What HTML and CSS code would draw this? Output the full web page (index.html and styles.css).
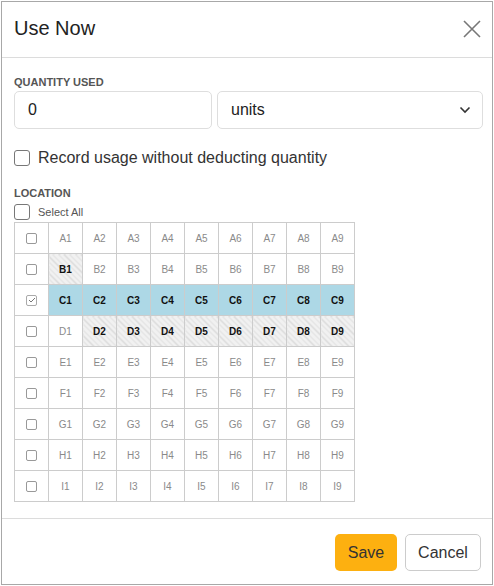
FILE: index.html
```html
<!DOCTYPE html>
<html>
<head>
<meta charset="utf-8">
<link rel="stylesheet" href="styles.css">
</head>
<body>
<div class="dialog">
  <div class="header">
    <h1 class="title">Use Now</h1>
    <svg class="close" width="18" height="18" viewBox="0 0 18 18"><path d="M1 1 L17 17 M17 1 L1 17" stroke="#777" stroke-width="1.6" fill="none"/></svg>
  </div>
  <div class="body">
    <div class="label">QUANTITY USED</div>
    <div class="qty-row">
      <div class="field qty">0</div>
      <div class="field unit">units
        <svg class="chev" width="12" height="8" viewBox="0 0 12 8"><path d="M1.5 1.5 L6 6 L10.5 1.5" stroke="#333" stroke-width="1.6" fill="none"/></svg>
      </div>
    </div>
    <div class="record">
      <span class="box"></span>
      <span class="record-text">Record usage without deducting quantity</span>
    </div>
    <div class="label loc">LOCATION</div>
    <div class="select-all">
      <span class="box"></span>
      <span class="sa-text">Select All</span>
    </div>
    <table class="grid" id="grid"></table>
  </div>
  <div class="footer">
    <button class="btn save">Save</button>
    <button class="btn cancel">Cancel</button>
  </div>
</div>
<script src="script.js"></script>
</body>
</html>
```

FILE: script.js
```js
const rows = "ABCDEFGHI".split("");
const grid = document.getElementById("grid");
const hatched = new Set(["B1","D2","D3","D4","D5","D6","D7","D8","D9"]);
rows.forEach(r => {
  const tr = document.createElement("tr");
  const td0 = document.createElement("td");
  td0.className = "chk";
  const b = document.createElement("span");
  b.className = "mini" + (r === "C" ? " on" : "");
  if (r === "C") b.innerHTML = '<svg width="8" height="6" viewBox="0 0 8 6"><path d="M1 3 L3 5 L7 1" stroke="#777" stroke-width="1" fill="none"/></svg>';
  td0.appendChild(b);
  tr.appendChild(td0);
  for (let i = 1; i <= 9; i++) {
    const td = document.createElement("td");
    const id = r + i;
    td.textContent = id;
    if (hatched.has(id)) td.className = "hatch";
    if (r === "C") td.className = "on";
    tr.appendChild(td);
  }
  grid.appendChild(tr);
});
```

FILE: styles.css
```css
* { box-sizing: border-box; }
html, body { margin: 0; padding: 0; background: #fff; }
body { font-family: "Liberation Sans", Arial, sans-serif; color: #222; }
.dialog {
  margin: 1px 0 0 1px;
  width: 492px;
  height: 584px;
  border: 1px solid #a8a8a8;
  display: flex;
  flex-direction: column;
}
.header {
  height: 56px;
  border-bottom: 1px solid #dcdcdc;
  display: flex;
  align-items: center;
  justify-content: space-between;
  padding: 0 11px 3px 12px;
}
.title { margin: 0; font-size: 20px; font-weight: 500; color: #222; }
.close { display: block; margin-top: 1px; }
.body { padding: 18px 8px 0 12px; flex: 1; }
.label { font-size: 11px; font-weight: bold; color: #555; line-height: 12px; }
.qty-row { display: flex; gap: 5px; margin-top: 3px; }
.field {
  height: 38px;
  border: 1px solid #dedede;
  border-radius: 5px;
  font-size: 16px;
  color: #222;
  display: flex;
  align-items: center;
  padding-left: 13px;
}
.qty { width: 198px; }
.unit { width: 266px; justify-content: space-between; padding-right: 11px; }
.chev { display: block; }
.record { display: flex; align-items: center; margin-top: 20px; height: 18px; }
.box {
  width: 16px; height: 16px;
  border: 1.5px solid #777;
  border-radius: 3px;
  display: inline-block;
}
.record-text { font-size: 16px; color: #333; margin-left: 8px; }
.loc { margin-top: 20px; }
.select-all { display: flex; align-items: center; margin-top: 5px; height: 16px; }
.sa-text { font-size: 11px; color: #555; margin-left: 8px; }
.grid {
  border-collapse: collapse;
  margin-top: 2px;
  table-layout: fixed;
}
.grid td {
  width: 34px; height: 31px;
  border: 1px solid #ccc;
  text-align: center;
  font-size: 10px;
  color: #8a8a8a;
  padding: 0;
}
.grid td.hatch {
  background: repeating-linear-gradient(45deg, #f1f1f1 0 3px, #dadada 3px 4px);
  color: #111;
  font-weight: bold;
}
.grid td.on { background: #add8e6; color: #111; font-weight: bold; }
.mini {
  width: 11px; height: 11px;
  border: 1px solid #999;
  border-radius: 2px;
  display: inline-flex;
  align-items: center;
  justify-content: center;
  vertical-align: middle;
  background: #fff;
}
.mini.on { border-color: #aaa; }
.footer {
  border-top: 1px solid #dcdcdc;
  height: 66px;
  display: flex;
  justify-content: flex-end;
  align-items: center;
  gap: 8px;
  padding: 2px 11px 0 0;
}
.btn {
  font-family: "Liberation Sans", Arial, sans-serif;
  font-size: 16px;
  height: 37px;
  border-radius: 5px;
  color: #333;
}
.save { width: 62px; background: #fdb010; border: none; }
.cancel { width: 76px; background: #fff; border: 1px solid #ccc; }
```
